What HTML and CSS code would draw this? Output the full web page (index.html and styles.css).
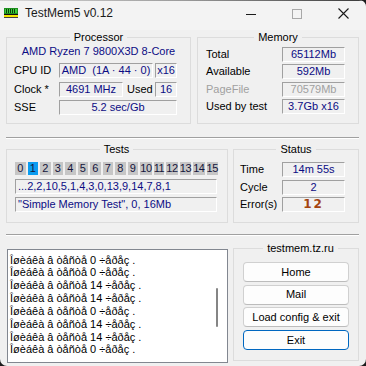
FILE: index.html
```html
<!DOCTYPE html>
<html>
<head>
<meta charset="utf-8">
<title>TestMem5 v0.12</title>
<link rel="stylesheet" href="styles.css">
</head>
<body>
<div class="window">
  <div class="topline"></div>
  <div class="titlebar">
    <svg class="app-icon" width="14" height="10" viewBox="0 0 14 10">
      <rect x="0" y="0" width="14" height="6" fill="#1f8f1f"/>
      <rect x="1" y="1" width="12" height="4" fill="#3ccf3c"/>
      <path d="M2.5 1v4M4.5 1v4M6.5 1v4M8.5 1v4M10.5 1v4" stroke="#0b3d0b" stroke-width="1"/>
      <rect x="0" y="6" width="14" height="1" fill="#111"/>
      <rect x="0" y="7" width="14" height="2" fill="#f2e600"/>
      <rect x="0" y="9" width="14" height="1" fill="#444"/>
    </svg>
    <span class="title">TestMem5 v0.12</span>
    <div class="controls">
      <span class="ctl"><svg width="10" height="10" viewBox="0 0 10 10"><path d="M0 5.5h10" stroke="#1a1a1a" stroke-width="1"/></svg></span>
      <span class="ctl"><svg width="10" height="10" viewBox="0 0 10 10"><rect x="0.5" y="0.5" width="9" height="9" fill="none" stroke="#a8a8a8" stroke-width="1"/></svg></span>
      <span class="ctl"><svg width="11" height="11" viewBox="0 0 11 11"><path d="M0.5 0.5l10 10M10.5 0.5l-10 10" stroke="#1a1a1a" stroke-width="1.1"/></svg></span>
    </div>
  </div>

  <div class="client">
    <div class="row row-top">
      <fieldset class="group proc">
        <legend align="center">Processor</legend>
        <div class="cpu-name">AMD Ryzen 7 9800X3D 8-Core</div>
        <div class="proc-grid">
          <span class="lbl">CPU ID</span>
          <span class="field f-cpuid">AMD&nbsp; (1A · 44 · 0)</span>
          <span class="field f-c4">x16</span>
          <span class="lbl">Clock *</span>
          <span class="field">4691 MHz</span>
          <span class="lbl used">Used</span>
          <span class="field f-c4">16</span>
          <span class="lbl">SSE</span>
          <span class="field f-sse">5.2 sec/Gb</span>
        </div>
      </fieldset>
      <fieldset class="group mem">
        <legend align="center">Memory</legend>
        <div class="mem-grid">
          <span class="lbl">Total</span><span class="field">65112Mb</span>
          <span class="lbl">Available</span><span class="field">592Mb</span>
          <span class="lbl disabled">PageFile</span><span class="field disabled">70579Mb</span>
          <span class="lbl">Used by test</span><span class="field">3.7Gb x16</span>
        </div>
      </fieldset>
    </div>

    <div class="sep sep1"></div>

    <div class="row row-mid">
      <fieldset class="group tests">
        <legend align="center">Tests</legend>
        <div class="cells">
          <span class="cell">0</span><span class="cell sel">1</span><span class="cell">2</span><span class="cell">3</span>
          <span class="cell">4</span><span class="cell">5</span><span class="cell">6</span><span class="cell">7</span>
          <span class="cell">8</span><span class="cell">9</span><span class="cell two">10</span><span class="cell two">11</span>
          <span class="cell two">12</span><span class="cell two">13</span><span class="cell two">14</span><span class="cell two">15</span>
        </div>
        <div class="field wide seq">...2,2,10,5,1,4,3,0,13,9,14,7,8,1</div>
        <div class="field wide cur">"Simple Memory Test", 0, 16Mb</div>
      </fieldset>
      <fieldset class="group status">
        <legend align="center">Status</legend>
        <div class="status-grid">
          <span class="lbl">Time</span><span class="field">14m 55s</span>
          <span class="lbl">Cycle</span><span class="field">2</span>
          <span class="lbl">Error(s)</span><span class="field errors">12</span>
        </div>
      </fieldset>
    </div>

    <div class="sep sep2"></div>

    <div class="row row-bottom">
      <div class="log">
        <div class="log-text">
          <div>Îøèáêà â òåñòå 0 ÷åðåç .</div>
          <div>Îøèáêà â òåñòå 0 ÷åðåç .</div>
          <div>Îøèáêà â òåñòå 14 ÷åðåç .</div>
          <div>Îøèáêà â òåñòå 14 ÷åðåç .</div>
          <div>Îøèáêà â òåñòå 0 ÷åðåç .</div>
          <div>Îøèáêà â òåñòå 14 ÷åðåç .</div>
          <div>Îøèáêà â òåñòå 14 ÷åðåç .</div>
          <div>Îøèáêà â òåñòå 0 ÷åðåç .</div>
        </div>
        <div class="scroll"><div class="thumb"></div></div>
      </div>
      <fieldset class="group links">
        <legend align="center">testmem.tz.ru</legend>
        <div class="buttons">
          <button class="btn">Home</button>
          <button class="btn">Mail</button>
          <button class="btn">Load config &amp; exit</button>
          <button class="btn default">Exit</button>
        </div>
      </fieldset>
    </div>
  </div>
</div>
</body>
</html>
```
FILE: styles.css
```css
html {
  background: #1c1c1c;
}
body {
  margin: 0;
  width: 366px;
  height: 366px;
  font-family: "Liberation Sans", Arial, sans-serif;
  font-size: 11px;
  color: #000;
}
.window {
  width: 366px;
  height: 366px;
  background: #f0f0f0;
  border-radius: 0 7px 7px 7px;
  overflow: hidden;
  display: flex;
  flex-direction: column;
}
.topline {
  height: 1px;
  background: linear-gradient(to right, #d8d8d8 0%, #9a9a9a 50%, #3a3a3a 100%);
}
.titlebar {
  height: 29px;
  background: #f3f3f3;
  display: flex;
  align-items: flex-start;
}
.app-icon {
  margin: 7px 0 0 4px;
  flex: none;
}
.title {
  margin: 5px 0 0 7px;
  font-size: 12px;
  line-height: 15px;
  color: #1a1a1a;
}
.controls {
  margin-left: auto;
  display: flex;
}
.ctl {
  width: 46px;
  height: 25px;
  display: flex;
  align-items: center;
  justify-content: center;
}

.client {
  padding: 1px 7px 0 6px;
  display: flex;
  flex-direction: column;
}
.row {
  display: flex;
}

.group {
  margin: 0;
  padding: 0;
  min-width: 0;
  border: 1px solid #dcdcdc;
  box-sizing: border-box;
}
.group legend {
  margin: 0 auto;
  padding: 0 4px;
  font-size: 11px;
  line-height: 13px;
  color: #000;
}

.lbl {
  line-height: 15px;
  white-space: nowrap;
}
.lbl.disabled {
  color: #a0a0a0;
}
.field {
  box-sizing: border-box;
  height: 15px;
  border-top: 1px solid #a0a0a0;
  border-left: 1px solid #a0a0a0;
  border-right: 1px solid #fff;
  border-bottom: 1px solid #fff;
  color: #0c0c84;
  text-align: center;
  line-height: 13px;
  white-space: nowrap;
  overflow: hidden;
}
.field.disabled {
  color: #a0a0a0;
}

/* Processor */
.proc {
  width: 185px;
  padding-bottom: 8px;
}
.cpu-name {
  height: 14px;
  line-height: 14px;
  text-align: center;
  color: #0c0c84;
}
.proc-grid {
  margin-top: 5px;
  padding-left: 7px;
  display: grid;
  grid-template-columns: 45px 64px 32px 22px;
  grid-auto-rows: 15px;
  row-gap: 3.5px;
}
.f-cpuid {
  grid-column: 2 / 4;
  margin-right: 2px;
}
.f-c4 {
  grid-column: 4;
}
.f-sse {
  grid-column: 2 / 5;
}
.used {
  padding-left: 4px;
}

/* Memory */
.mem {
  width: 162px;
  margin-left: 6px;
}
.mem-grid {
  padding: 3px 0 0 8px;
  display: grid;
  grid-template-columns: 76px 63px;
  grid-auto-rows: 15px;
  row-gap: 2.34px;
}

.sep {
  border-top: 1px solid #a0a0a0;
  border-bottom: 1px solid #fff;
}
.sep1 {
  margin-top: 13px;
}
.sep2 {
  margin-top: 11px;
}

/* Tests */
.row-mid {
  margin-top: 4px;
}
.tests {
  width: 222px;
  padding: 6px 9px 10px 8px;
}
.cells {
  display: grid;
  grid-template-columns: repeat(16, 1fr);
  column-gap: 2px;
  height: 13px;
}
.cell {
  background: #c6c6c6;
  text-align: center;
  line-height: 13px;
  color: #14143c;
  white-space: nowrap;
  display: flex;
  justify-content: center;
  overflow: visible;
}
.cell.two {
  letter-spacing: -0.4px;
}
.cell.sel {
  background: #0a9cf0;
}
.field.wide {
  text-align: left;
  padding-left: 2px;
  margin-right: 1px;
}
.seq {
  margin-top: 4px;
}
.cur {
  margin-top: 3px;
}

/* Status */
.status {
  width: 126px;
  margin-left: 5px;
}
.status-grid {
  padding: 6px 0 0 6px;
  display: grid;
  grid-template-columns: 42px 63px;
  grid-auto-rows: 15px;
  row-gap: 2.5px;
}
.errors {
  font-family: "DejaVu Sans", sans-serif;
  font-weight: bold;
  font-size: 12px;
  letter-spacing: 2px;
  color: #a4430f;
  line-height: 13px;
}

/* Bottom */
.row-bottom {
  margin-top: 6px;
  align-items: flex-start;
}
.log {
  margin: 7px 0 0 1px;
  width: 221px;
  height: 114px;
  box-sizing: border-box;
  border: 1px solid #828790;
  background: #fff;
  display: flex;
}
.log-text {
  flex: 1;
  padding: 3.5px 0 0 2px;
  line-height: 12.85px;
  white-space: nowrap;
  overflow: hidden;
}
.scroll {
  width: 11px;
  flex: none;
}
.thumb {
  margin-top: 38px;
  width: 2px;
  height: 39px;
  border-radius: 1px;
  background: #858585;
}
.links {
  width: 126px;
  height: 119px;
  margin-left: 5px;
  padding: 7px 0 0 9px;
}
.buttons {
  display: flex;
  flex-direction: column;
  gap: 2.7px;
}
.btn {
  width: 106px;
  height: 20px;
  box-sizing: border-box;
  margin: 0;
  padding: 0;
  font-family: "Liberation Sans", Arial, sans-serif;
  font-size: 11px;
  line-height: 17px;
  color: #000;
  background: #fdfdfd;
  border: 1px solid #d0d0d0;
  border-bottom-color: #bcbcbc;
  border-radius: 4px;
}
.btn.default {
  border: 1px solid #0067c0;
}
```
